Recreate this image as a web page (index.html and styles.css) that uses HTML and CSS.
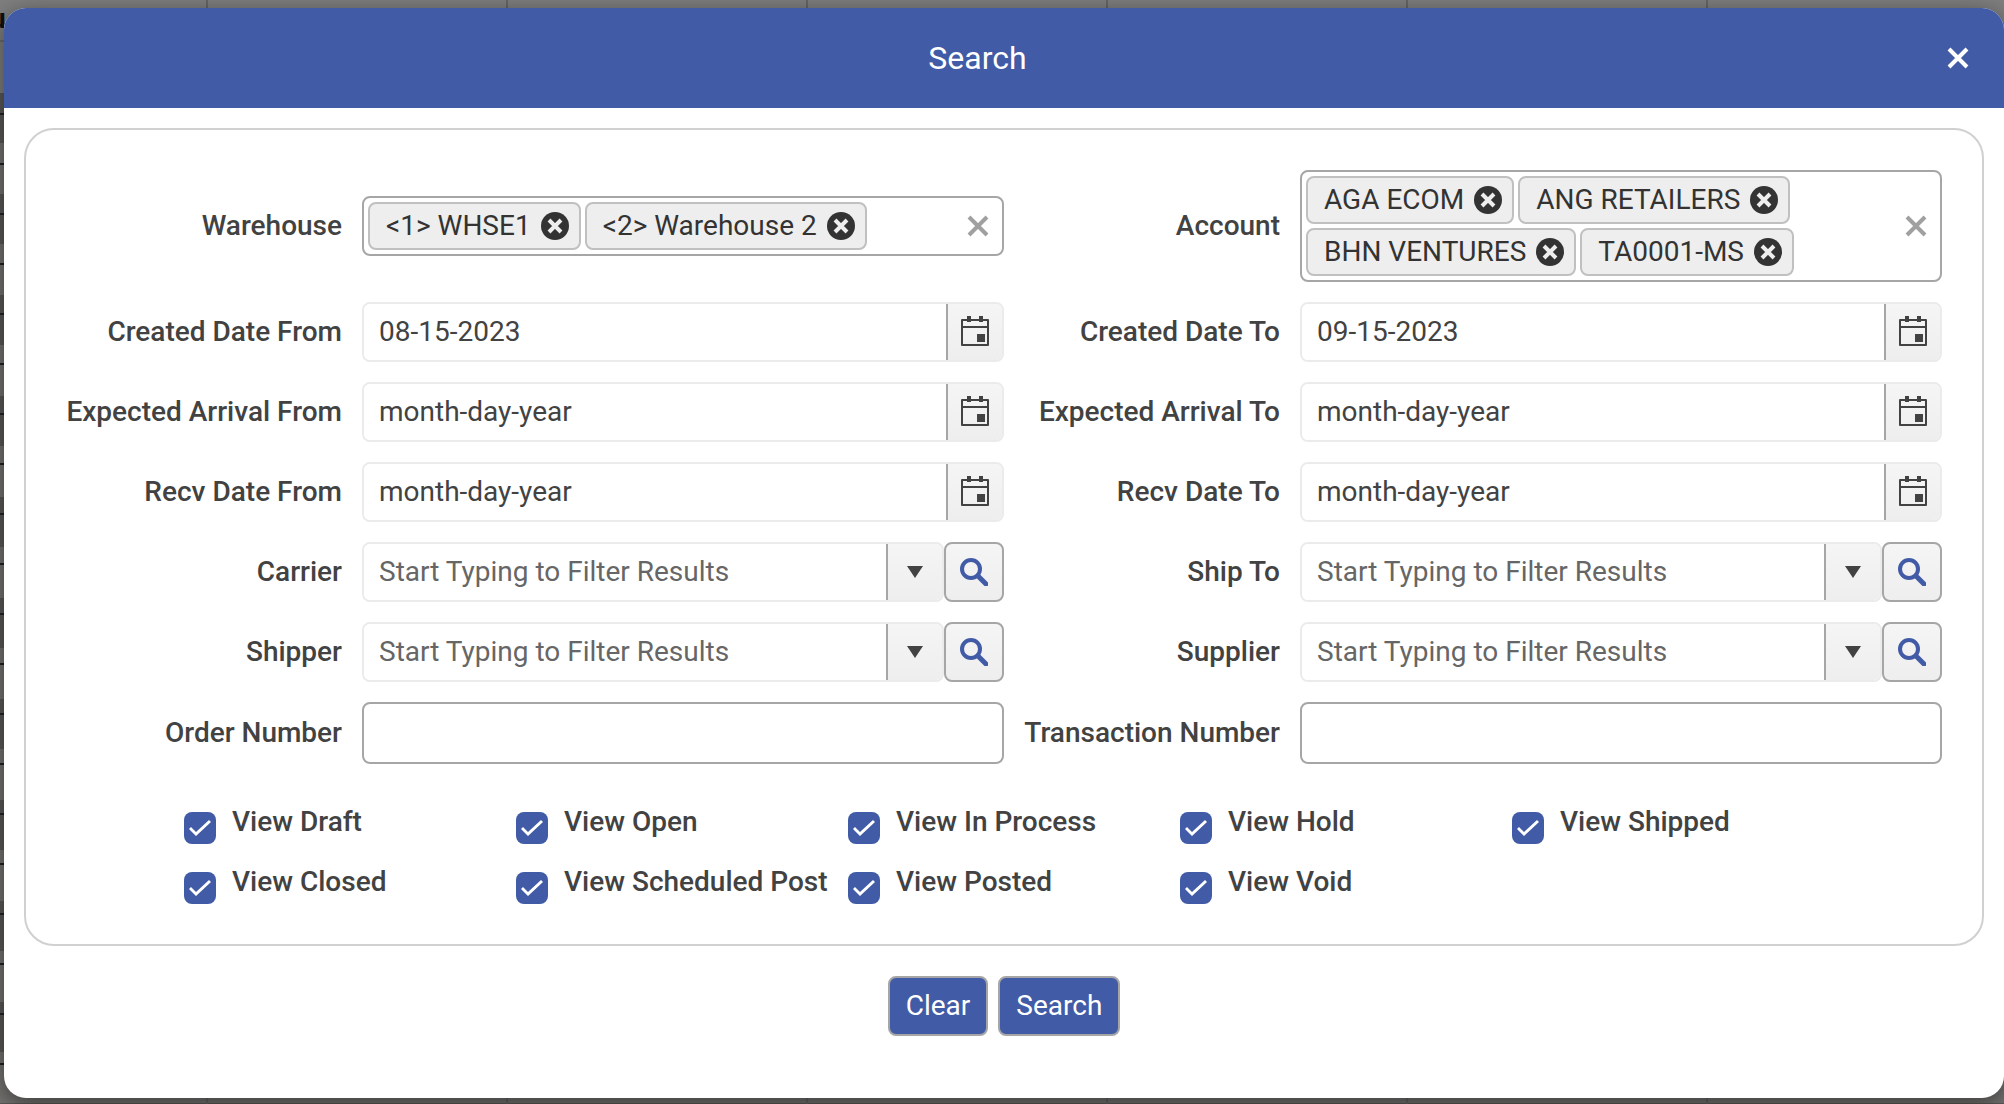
FILE: index.html
```html
<!DOCTYPE html>
<html lang="en">
<head>
    <meta charset="UTF-8">
    <title>Search</title>
    <link rel="stylesheet" href="styles.css">
</head>
<body>
    <svg class="sprite" aria-hidden="true">
        <symbol id="icon-calendar" viewBox="0 0 28 32">
            <path d="M1 4h26v25H1zM1 11h26" fill="none" stroke="currentColor" stroke-width="2" stroke-linejoin="round"/>
            <path d="M6 0h4v6H6zM18 0h4v6h-4zM16 18h8v8h-8z" fill="currentColor"/>
        </symbol>
        <symbol id="icon-x" viewBox="0 0 22 22">
            <path d="M2 2l18 18M20 2L2 20" fill="none" stroke="currentColor"/>
        </symbol>
        <symbol id="icon-remove" viewBox="0 0 28 28">
            <circle cx="14" cy="14" r="14" fill="currentColor"/>
            <path d="M8 8l12 12M20 8L8 20" stroke="#eee" stroke-width="4"/>
        </symbol>
        <symbol id="icon-search" viewBox="0 0 28 28">
            <circle cx="11" cy="11" r="9" fill="none" stroke="currentColor" stroke-width="4"/>
            <path d="M18 18l8 8" stroke="currentColor" stroke-width="5" stroke-linecap="round"/>
        </symbol>
        <symbol id="icon-down" viewBox="0 0 16 12">
            <path d="M0 0h16L8 12z" fill="currentColor"/>
        </symbol>
    </svg>

    <div class="backdrop" aria-hidden="true">
        <div class="grid-head">u</div>
        <div class="grid-rows"></div>
        <div class="grid-lines"></div>
    </div>

    <form class="dialog" role="dialog" aria-labelledby="dialogTitle">
        <div class="dialog-header">
            <h1 id="dialogTitle">Search</h1>
            <button type="button" class="close" aria-label="Close"><svg><use href="#icon-x"/></svg></button>
        </div>

        <div class="panel">
            <div class="fields">
                <div class="field">
                    <label for="warehouse">Warehouse</label>
                    <div class="multi">
                        <div class="tags">
                            <span class="tag">&lt;1&gt; WHSE1 <button type="button" aria-label="Remove"><svg><use href="#icon-remove"/></svg></button></span>
                            <span class="tag">&lt;2&gt; Warehouse 2 <button type="button" aria-label="Remove"><svg><use href="#icon-remove"/></svg></button></span>
                            <input type="text" id="warehouse">
                        </div>
                        <button type="button" class="clear-all" aria-label="Clear all"><svg><use href="#icon-x"/></svg></button>
                    </div>
                </div>
                <div class="field">
                    <label for="account">Account</label>
                    <div class="multi">
                        <div class="tags">
                            <span class="tag">AGA ECOM <button type="button" aria-label="Remove"><svg><use href="#icon-remove"/></svg></button></span>
                            <span class="tag">ANG RETAILERS <button type="button" aria-label="Remove"><svg><use href="#icon-remove"/></svg></button></span>
                            <span class="tag">BHN VENTURES <button type="button" aria-label="Remove"><svg><use href="#icon-remove"/></svg></button></span>
                            <span class="tag">TA0001-MS <button type="button" aria-label="Remove"><svg><use href="#icon-remove"/></svg></button></span>
                            <input type="text" id="account">
                        </div>
                        <button type="button" class="clear-all" aria-label="Clear all"><svg><use href="#icon-x"/></svg></button>
                    </div>
                </div>

                <div class="field">
                    <label for="createdFrom">Created Date From</label>
                    <div class="picker">
                        <input type="text" id="createdFrom" value="08-15-2023">
                        <button type="button" aria-label="Open calendar"><svg class="calendar"><use href="#icon-calendar"/></svg></button>
                    </div>
                </div>
                <div class="field">
                    <label for="createdTo">Created Date To</label>
                    <div class="picker">
                        <input type="text" id="createdTo" value="09-15-2023">
                        <button type="button" aria-label="Open calendar"><svg class="calendar"><use href="#icon-calendar"/></svg></button>
                    </div>
                </div>

                <div class="field">
                    <label for="arrivalFrom">Expected Arrival From</label>
                    <div class="picker">
                        <input type="text" id="arrivalFrom" value="month-day-year">
                        <button type="button" aria-label="Open calendar"><svg class="calendar"><use href="#icon-calendar"/></svg></button>
                    </div>
                </div>
                <div class="field">
                    <label for="arrivalTo">Expected Arrival To</label>
                    <div class="picker">
                        <input type="text" id="arrivalTo" value="month-day-year">
                        <button type="button" aria-label="Open calendar"><svg class="calendar"><use href="#icon-calendar"/></svg></button>
                    </div>
                </div>

                <div class="field">
                    <label for="recvFrom">Recv Date From</label>
                    <div class="picker">
                        <input type="text" id="recvFrom" value="month-day-year">
                        <button type="button" aria-label="Open calendar"><svg class="calendar"><use href="#icon-calendar"/></svg></button>
                    </div>
                </div>
                <div class="field">
                    <label for="recvTo">Recv Date To</label>
                    <div class="picker">
                        <input type="text" id="recvTo" value="month-day-year">
                        <button type="button" aria-label="Open calendar"><svg class="calendar"><use href="#icon-calendar"/></svg></button>
                    </div>
                </div>

                <div class="field">
                    <label for="carrier">Carrier</label>
                    <div class="lookup">
                        <div class="picker">
                            <input type="text" id="carrier" placeholder="Start Typing to Filter Results">
                            <button type="button" aria-label="Open list"><svg class="down"><use href="#icon-down"/></svg></button>
                        </div>
                        <button type="button" class="find" aria-label="Find"><svg><use href="#icon-search"/></svg></button>
                    </div>
                </div>
                <div class="field">
                    <label for="shipTo">Ship To</label>
                    <div class="lookup">
                        <div class="picker">
                            <input type="text" id="shipTo" placeholder="Start Typing to Filter Results">
                            <button type="button" aria-label="Open list"><svg class="down"><use href="#icon-down"/></svg></button>
                        </div>
                        <button type="button" class="find" aria-label="Find"><svg><use href="#icon-search"/></svg></button>
                    </div>
                </div>

                <div class="field">
                    <label for="shipper">Shipper</label>
                    <div class="lookup">
                        <div class="picker">
                            <input type="text" id="shipper" placeholder="Start Typing to Filter Results">
                            <button type="button" aria-label="Open list"><svg class="down"><use href="#icon-down"/></svg></button>
                        </div>
                        <button type="button" class="find" aria-label="Find"><svg><use href="#icon-search"/></svg></button>
                    </div>
                </div>
                <div class="field">
                    <label for="supplier">Supplier</label>
                    <div class="lookup">
                        <div class="picker">
                            <input type="text" id="supplier" placeholder="Start Typing to Filter Results">
                            <button type="button" aria-label="Open list"><svg class="down"><use href="#icon-down"/></svg></button>
                        </div>
                        <button type="button" class="find" aria-label="Find"><svg><use href="#icon-search"/></svg></button>
                    </div>
                </div>

                <div class="field">
                    <label for="orderNumber">Order Number</label>
                    <input type="text" class="text-box" id="orderNumber">
                </div>
                <div class="field">
                    <label for="transNumber">Transaction Number</label>
                    <input type="text" class="text-box" id="transNumber">
                </div>
            </div>

            <div class="checks">
                <label><input type="checkbox" checked><span>View Draft</span></label>
                <label><input type="checkbox" checked><span>View Open</span></label>
                <label><input type="checkbox" checked><span>View In Process</span></label>
                <label><input type="checkbox" checked><span>View Hold</span></label>
                <label><input type="checkbox" checked><span>View Shipped</span></label>
                <label><input type="checkbox" checked><span>View Closed</span></label>
                <label><input type="checkbox" checked><span>View Scheduled Post</span></label>
                <label><input type="checkbox" checked><span>View Posted</span></label>
                <label><input type="checkbox" checked><span>View Void</span></label>
            </div>
        </div>

        <div class="actions">
            <button type="reset">Clear</button>
            <button type="submit">Search</button>
        </div>
    </form>
</body>
</html>
```
FILE: styles.css
```css
* {
    box-sizing: border-box;
}
body {
    margin: 0;
    padding: 8px 0 6px 4px;
    min-height: 100vh;
    display: flex;
    background: #7f7f7f;
    color: #424242;
    font-family: Roboto, sans-serif;
    font-size: 28px;
    line-height: 40px;
    overflow: hidden;
}
input, button {
    font: inherit;
    color: inherit;
    margin: 0;
}
button {
    display: flex;
    align-items: center;
    justify-content: center;
    padding: 0;
    border: none;
    background: none;
    cursor: pointer;
}
.sprite {
    position: absolute;
    width: 0;
    height: 0;
}

/* dimmed grid behind the dialog */
.backdrop {
    position: absolute;
    inset: 0;
    overflow: hidden;
    z-index: -1;
}
.grid-head {
    height: 42px;
    border-bottom: 2px solid #6c6c6c;
    color: #111;
    font-weight: bold;
    line-height: 38px;
    text-indent: -10px;
}
.grid-rows {
    height: 100%;
    margin-top: 51px;
    background:
        repeating-linear-gradient(transparent 0 20px, #222 20px 22px, transparent 22px 50px) 0 0 / 4px 100% no-repeat,
        repeating-linear-gradient(#5b5a58 0 50px, #757472 50px 101px);
}
.grid-lines {
    position: absolute;
    inset: 0;
    background: repeating-linear-gradient(90deg, transparent 0 298px, #666 298px 300px);
    left: -92px;
}

.dialog {
    flex: 1;
    display: flex;
    flex-direction: column;
    background: #fff;
    border-radius: 22px;
    box-shadow: 0 6px 24px rgba(0, 0, 0, 0.5);
    overflow: hidden;
}
.dialog-header {
    display: flex;
    align-items: center;
    height: 100px;
    padding: 0 35px 0 0;
    background: #415ba6;
    color: #fff;
}
.dialog-header h1 {
    flex: 1;
    margin: 0;
    padding-left: 4px;
    font-size: 32px;
    font-weight: 400;
    text-align: center;
}
.close svg {
    width: 22px;
    height: 22px;
    stroke-width: 4px;
}
.panel {
    margin: 20px;
    margin-bottom: 0;
    padding: 40px;
    border: 2px solid #d0d0d0;
    border-radius: 30px;
}
.fields {
    display: grid;
    grid-template-columns: 1fr 1fr;
    row-gap: 20px;
}
.field {
    display: grid;
    grid-template-columns: 276px 1fr;
    column-gap: 20px;
    align-items: center;
}
.field label {
    font-weight: 500;
    text-align: right;
    white-space: nowrap;
}

.multi {
    display: flex;
    align-items: center;
    padding: 4px;
    border: 2px solid #a6a6a6;
    border-radius: 8px;
}
.tags {
    flex: 1;
    display: flex;
    flex-wrap: wrap;
    gap: 4px;
    padding-right: 60px;
}
.tags input {
    width: 20px;
    border: none;
    outline: none;
    padding: 0;
    height: 48px;
}
.tag {
    display: flex;
    align-items: center;
    gap: 10px;
    height: 48px;
    padding: 0 10px 0 16px;
    border: 2px solid #c0c0c0;
    border-radius: 8px;
    background: #eee;
    color: #333;
    white-space: nowrap;
}
.tag svg {
    width: 28px;
    height: 28px;
}
.clear-all {
    width: 40px;
    color: #a0a0a0;
}
.clear-all svg {
    width: 22px;
    height: 22px;
    stroke-width: 4px;
}

.picker {
    flex: 1;
    display: flex;
    height: 60px;
    border: 2px solid #ebebeb;
    border-radius: 8px;
    overflow: hidden;
}
.picker input {
    flex: 1;
    min-width: 0;
    padding: 0 15px;
    border: none;
    outline: none;
    background: #fff;
}
.picker input::placeholder {
    color: #666;
}
.picker button {
    width: 56px;
    border-left: 2px solid #a6a6a6;
    background: linear-gradient(#f5f5f5, #eee);
}
.calendar {
    width: 28px;
    height: 32px;
}
.down {
    width: 16px;
    height: 12px;
}
.lookup {
    display: flex;
}
.find {
    width: 60px;
    height: 60px;
    border: 2px solid #a6a6a6;
    border-radius: 8px;
    background: linear-gradient(#f5f5f5, #eee);
    color: #415ba6;
}
.find svg {
    width: 28px;
    height: 28px;
}
.text-box {
    width: 100%;
    height: 62px;
    padding: 0 16px;
    border: 2px solid #a6a6a6;
    border-radius: 8px;
}

.checks {
    display: grid;
    grid-template-columns: repeat(5, 1fr);
    row-gap: 18px;
    margin: 38px 98px 0 118px;
}
.checks label {
    display: flex;
    gap: 16px;
    font-weight: 500;
    white-space: nowrap;
}
.checks input {
    appearance: none;
    flex: none;
    width: 32px;
    height: 32px;
    margin-top: 10px;
    border-radius: 8px;
    background: #415ba6;
    display: grid;
    place-items: center;
}
.checks input:checked::before {
    content: "";
    width: 22px;
    height: 16px;
    background: #fff;
    clip-path: polygon(0 9px, 2px 7px, 7px 12px, 20px 0, 22px 2px, 7px 16px);
}

.actions {
    display: flex;
    justify-content: center;
    gap: 10px;
    margin-top: 30px;
}
.actions button {
    height: 60px;
    padding: 0 16px;
    border: 2px solid #a6a6a6;
    border-radius: 8px;
    background: #415ba6;
    color: #fff;
}
```
